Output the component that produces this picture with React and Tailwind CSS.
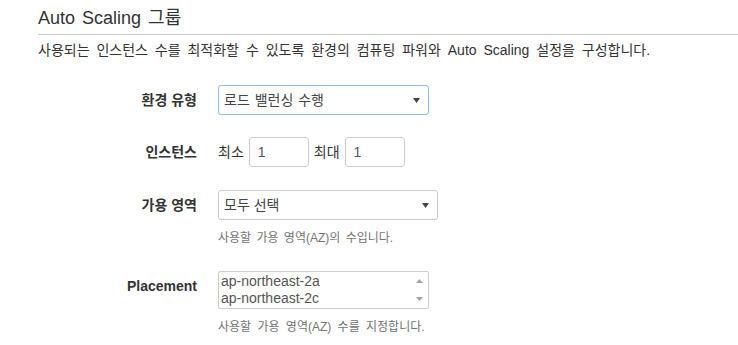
import React from 'react';

const font = { fontFamily: '"Liberation Sans", "Noto Sans CJK KR", Arial, sans-serif' };

const Caret = ({ color = '#444' }) => (
    <svg width="7" height="5" viewBox="0 0 7 5" className="shrink-0">
        <path d="M0 0 L7 0 L3.5 5 Z" fill={color} />
    </svg>
);

const Label = ({ children }) => (
    <div className="w-[159px] shrink-0 h-[30px] flex items-center justify-end text-[14px] font-bold text-[#333]">
        {children}
    </div>
);

const App = () => {
    return (
        <div className="min-h-screen bg-white pl-[38px]" style={font}>
            <h2 className="text-[18px] leading-[24px] pt-[6px] pb-[4px] text-[#333] border-b border-[#cccccc] [word-spacing:2px]">
                Auto Scaling 그룹
            </h2>
            <p className="mt-[5px] text-[14px] leading-[20px] text-[#333] [word-spacing:3px]">
                사용되는 인스턴스 수를 최적화할 수 있도록 환경의 컴퓨팅 파워와 Auto Scaling 설정을 구성합니다.
            </p>

            {/* 환경 유형 */}
            <div className="mt-[25px] flex gap-[21px]">
                <Label>환경 유형</Label>
                <div className="w-[211px] h-[30px] border border-[#8fb8e8] rounded-[3px] flex items-center justify-between pl-[5px] pr-[8px] text-[14px] text-[#444] [word-spacing:1px]">
                    <span>로드 밸런싱 수행</span>
                    <Caret />
                </div>
            </div>

            {/* 인스턴스 */}
            <div className="mt-[22px] flex gap-[21px]">
                <Label>인스턴스</Label>
                <div className="flex items-center text-[14px] text-[#333]">
                    <span>최소</span>
                    <div className="ml-[5px] w-[60px] shrink-0 h-[30px] border border-[#cccccc] rounded-[3px] flex items-center px-[8px] text-[#555]">1</div>
                    <span className="ml-[5px]">최대</span>
                    <div className="ml-[5px] w-[60px] shrink-0 h-[30px] border border-[#cccccc] rounded-[3px] flex items-center px-[8px] text-[#555]">1</div>
                </div>
            </div>

            {/* 가용 영역 */}
            <div className="mt-[23px] flex items-start gap-[21px]">
                <Label>가용 영역</Label>
                <div className="flex flex-col">
                    <div className="w-[220px] h-[30px] border border-[#cccccc] rounded-[3px] flex items-center justify-between pl-[5px] pr-[8px] text-[14px] text-[#444]">
                        <span>모두 선택</span>
                        <Caret />
                    </div>
                    <p className="mt-[10px] text-[12px] leading-[17px] text-[#737373] [word-spacing:2px]">
                        사용할 가용 영역(AZ)의 수입니다.
                    </p>
                </div>
            </div>

            {/* Placement */}
            <div className="mt-[24px] flex items-start gap-[21px]">
                <div className="w-[159px] shrink-0 pt-[5px] text-right text-[14px] leading-[20px] font-bold text-[#333]">
                    Placement
                </div>
                <div className="flex flex-col">
                    <div className="w-[211px] h-[38px] border border-[#cccccc] rounded-[2px] flex text-[14px] leading-[17px] text-[#555]">
                        <div className="flex-1 pl-[2px] pt-[1px]">
                            <div>ap-northeast-2a</div>
                            <div>ap-northeast-2c</div>
                        </div>
                        <div className="w-[17px] flex flex-col items-center justify-between py-[7px]">
                            <svg width="7" height="4" viewBox="0 0 7 4">
                                <path d="M0 4 L7 4 L3.5 0 Z" fill="#a3a3a3" />
                            </svg>
                            <svg width="7" height="4" viewBox="0 0 7 4">
                                <path d="M0 0 L7 0 L3.5 4 Z" fill="#a3a3a3" />
                            </svg>
                        </div>
                    </div>
                    <p className="mt-[10px] text-[12px] leading-[17px] text-[#737373] [word-spacing:3px]">
                        사용할 가용 영역(AZ) 수를 지정합니다.
                    </p>
                </div>
            </div>
        </div>
    );
};

export default App;
